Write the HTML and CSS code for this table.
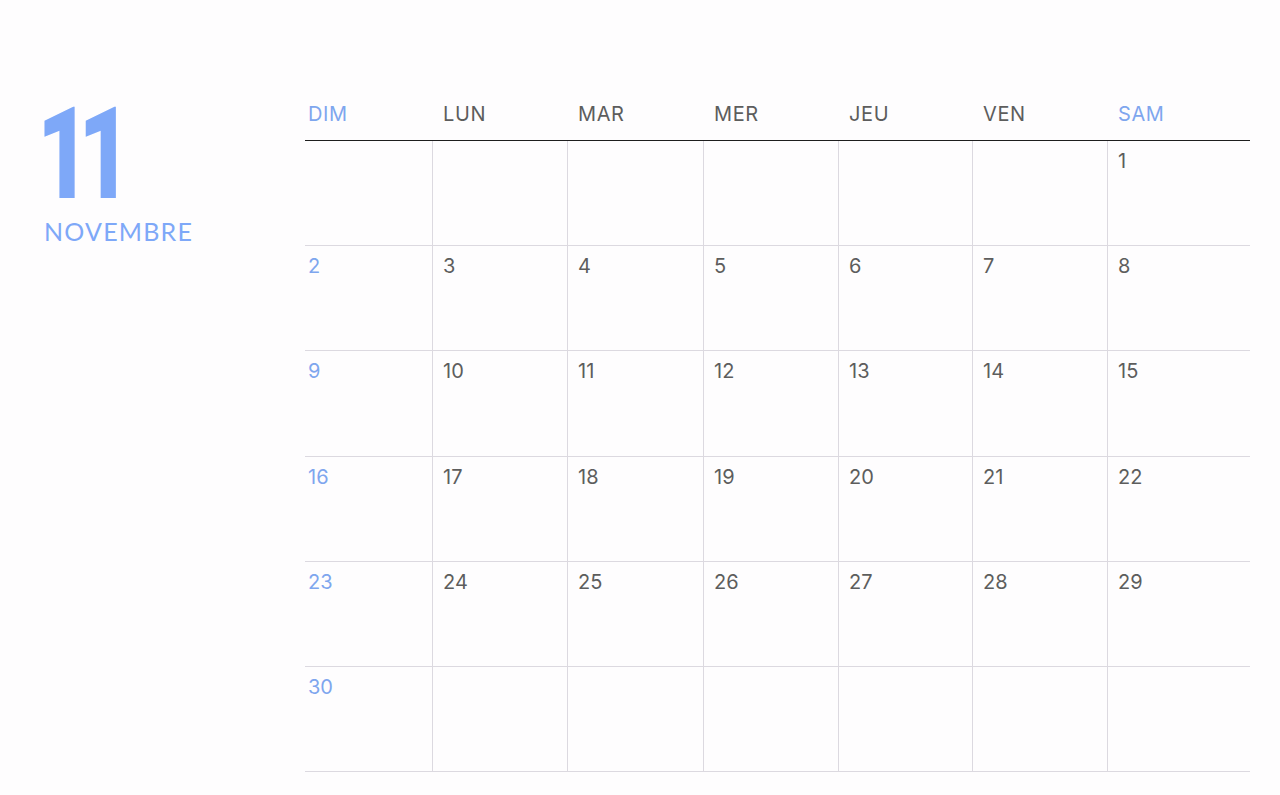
FILE: index.html
```html
<!DOCTYPE html>
<html lang="fr">
<head>
<meta charset="utf-8">
<title>Novembre</title>
<link rel="stylesheet" href="styles.css">
</head>
<body>
<div class="page">
  <aside class="aside">
    <div class="month-num"><span class="num-text">11</span></div>
    <div class="month-name">NOVEMBRE</div>
  </aside>
  <main class="calendar">
    <div class="head">
      <div class="hcell weekend first">DIM</div>
      <div class="hcell">LUN</div>
      <div class="hcell">MAR</div>
      <div class="hcell">MER</div>
      <div class="hcell">JEU</div>
      <div class="hcell">VEN</div>
      <div class="hcell weekend">SAM</div>
    </div>
    <div class="row">
      <div class="cell first"></div><div class="cell"></div><div class="cell"></div><div class="cell"></div><div class="cell"></div><div class="cell"></div><div class="cell">1</div>
    </div>
    <div class="row">
      <div class="cell first weekend">2</div><div class="cell">3</div><div class="cell">4</div><div class="cell">5</div><div class="cell">6</div><div class="cell">7</div><div class="cell">8</div>
    </div>
    <div class="row tall">
      <div class="cell first weekend">9</div><div class="cell">10</div><div class="cell">11</div><div class="cell">12</div><div class="cell">13</div><div class="cell">14</div><div class="cell">15</div>
    </div>
    <div class="row">
      <div class="cell first weekend">16</div><div class="cell">17</div><div class="cell">18</div><div class="cell">19</div><div class="cell">20</div><div class="cell">21</div><div class="cell">22</div>
    </div>
    <div class="row">
      <div class="cell first weekend">23</div><div class="cell">24</div><div class="cell">25</div><div class="cell">26</div><div class="cell">27</div><div class="cell">28</div><div class="cell">29</div>
    </div>
    <div class="row">
      <div class="cell first weekend">30</div><div class="cell"></div><div class="cell"></div><div class="cell"></div><div class="cell"></div><div class="cell"></div><div class="cell"></div>
    </div>
  </main>
</div>
</body>
</html>
```
FILE: styles.css
```css
html, body {
  margin: 0;
  padding: 0;
  background: #fefdfe;
}
body {
  font-family: "Inter", "Lato", sans-serif;
  color: #5d5d5d;
}
.page {
  display: flex;
  padding-top: 92px;
}
.aside {
  width: 265px;
  padding-left: 40px;
}
.month-num {
  height: 100px;
  margin-top: 12px;
}
.num-text {
  display: inline-block;
  font-family: "Roboto", sans-serif;
  font-weight: 900;
  font-size: 128px;
  line-height: 100px;
  color: #7ea8f8;
  letter-spacing: -17px;
  transform: scaleX(0.72);
  transform-origin: left center;
  margin-left: -3px;
}
.month-name {
  font-family: "Lato", sans-serif;
  font-size: 25px;
  line-height: 30px;
  color: #7ea8f8;
  letter-spacing: 1.2px;
  padding-left: 4px;
  margin-top: 12px;
}
.calendar {
  width: 945px;
}
.head, .row {
  display: grid;
  grid-template-columns: 127px 135px 136px 135px 134px 135px 143px;
}
.head {
  height: 48px;
  border-bottom: 1px solid #1e1e1e;
}
.hcell {
  font-size: 20px;
  line-height: 24px;
  padding: 10px 0 0 11px;
  letter-spacing: 0.6px;
}
.row {
  height: 104px;
  border-bottom: 1px solid #dcd9e0;
}
.row.tall {
  height: 105px;
}
.cell {
  border-left: 1px solid #dcd9e0;
  font-size: 20px;
  line-height: 24px;
  padding: 8px 0 0 10px;
}
.cell.first, .hcell.first {
  border-left: none;
  padding-left: 3px;
}
.weekend {
  color: #7ea6ee;
}
```
